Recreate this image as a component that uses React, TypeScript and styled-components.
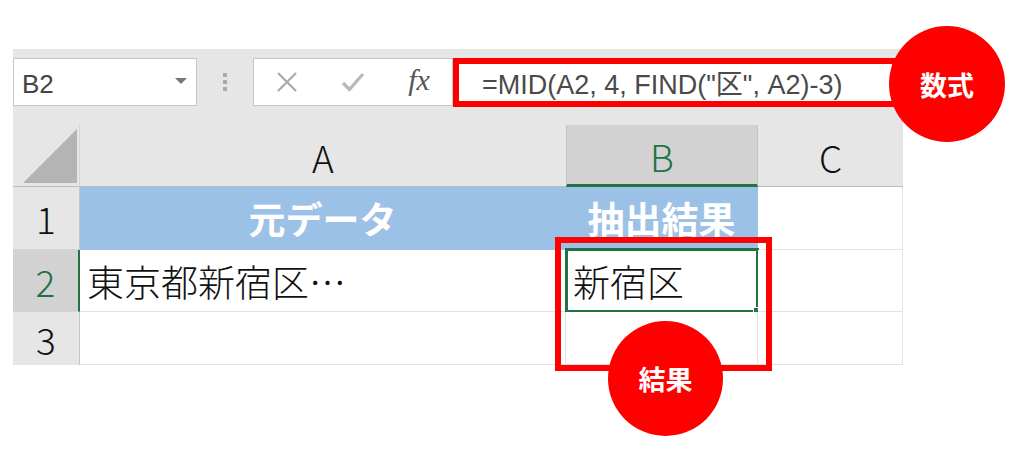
import React from "react";
import styled, { createGlobalStyle } from "styled-components";

const GlobalStyle = createGlobalStyle`
  body {
    margin: 0;
    background: #fff;
    font-family: "Noto Sans CJK JP", "Liberation Sans", sans-serif;
  }
  * {
    box-sizing: border-box;
  }
`;

const Page = styled.div`
  position: relative;
  width: 1024px;
  height: 450px;
  padding: 49px 0 0 13px;
  overflow: hidden;
`;

const Sheet = styled.div`
  width: 890px;
`;

const Toolbar = styled.div`
  display: flex;
  align-items: flex-start;
  height: 76px;
  padding-top: 9px;
  background: #e6e6e6;
`;

const NameBox = styled.div`
  width: 184px;
  height: 48px;
  border: 1px solid #c6c6c6;
  background: #fff;
  display: flex;
  align-items: center;
  justify-content: space-between;
  padding: 4px 9px 0 8px;
  font-family: "Liberation Sans", sans-serif;
  font-size: 26px;
  color: #444;
`;

const DropArrow = styled.span`
  width: 0;
  height: 0;
  margin-top: -6px;
  border-left: 6px solid transparent;
  border-right: 6px solid transparent;
  border-top: 6px solid #777;
`;

const Splitter = styled.div`
  width: 56px;
  height: 48px;
  display: flex;
  flex-direction: column;
  align-items: center;
  justify-content: center;
  gap: 3px;

  span {
    width: 4px;
    height: 4px;
    background: #aaa;
  }
`;

const FormulaButtons = styled.div`
  width: 200px;
  height: 48px;
  border: 1px solid #c6c6c6;
  background: #fff;
  display: grid;
  grid-template-columns: repeat(3, 1fr);
  align-items: center;
  justify-items: center;
`;

const Fx = styled.span`
  font-family: "Liberation Serif", serif;
  font-style: italic;
  font-size: 30px;
  color: #555;
  margin-top: -4px;
`;

const FormulaInput = styled.div`
  flex: 1;
  height: 48px;
  background: #fff;
  display: flex;
  align-items: center;
  padding-left: 29px;
  font-family: "Liberation Sans", "Noto Sans CJK JP", sans-serif;
  font-size: 27px;
  color: #4a4a4a;
  white-space: nowrap;
`;

const Grid = styled.div`
  display: grid;
  grid-template-columns: 67px 486px 192px 145px;
  grid-template-rows: 62px 63px 62px 53px;
`;

const Corner = styled.div`
  background: #e6e6e6;
  border-right: 1px solid #d6d6d6;
  border-bottom: 1px solid #bdbdbd;
  display: flex;
  align-items: flex-end;
`;

const ColHeader = styled.div<{ $selected?: boolean }>`
  display: flex;
  align-items: center;
  justify-content: center;
  font-size: 37px;
  font-weight: 300;
  padding-top: 2px;
  background: ${(p) => (p.$selected ? "#d2d2d2" : "#e6e6e6")};
  color: ${(p) => (p.$selected ? "#217346" : "#111")};
  border-bottom: ${(p) => (p.$selected ? "3px solid #217346" : "1px solid #bdbdbd")};
  border-left: ${(p) => (p.$selected ? "1px solid #c4c4c4" : "none")};
  border-right: ${(p) => (p.$selected ? "1px solid #c4c4c4" : "none")};
`;

const RowHeader = styled.div<{ $selected?: boolean; $last?: boolean }>`
  display: flex;
  align-items: center;
  justify-content: center;
  font-size: 37px;
  font-weight: 300;
  background: ${(p) => (p.$selected ? "#d2d2d2" : "#e6e6e6")};
  color: ${(p) => (p.$selected ? "#217346" : "#111")};
  border-right: ${(p) => (p.$selected ? "2px solid #217346" : "1px solid #c6c6c6")};
  border-bottom: ${(p) => (p.$last ? "none" : "1px solid #d4d4d4")};
`;

const Cell = styled.div<{ $fill?: boolean; $center?: boolean }>`
  position: relative;
  display: flex;
  align-items: center;
  justify-content: ${(p) => (p.$center ? "center" : "flex-start")};
  padding-left: ${(p) => (p.$center ? "0" : "7px")};
  font-size: 37px;
  font-weight: ${(p) => (p.$fill ? 700 : 300)};
  color: ${(p) => (p.$fill ? "#fff" : "#111")};
  background: ${(p) => (p.$fill ? "#9bc2e6" : "#fff")};
  border-right: 1px solid ${(p) => (p.$fill ? "#9bc2e6" : "#e3e3e3")};
  border-bottom: 1px solid ${(p) => (p.$fill ? "#9bc2e6" : "#e3e3e3")};
  white-space: nowrap;
`;

const ActiveFrame = styled.div`
  position: absolute;
  top: -2px;
  left: -1px;
  right: -2px;
  bottom: -2px;
  border: 3px solid #217346;
  pointer-events: none;
`;

const FillHandle = styled.span`
  position: absolute;
  right: -7px;
  bottom: -7px;
  width: 10px;
  height: 10px;
  background: #217346;
  border: 1px solid #fff;
`;

const Highlight = styled.div<{ $x: number; $y: number; $w: number; $h: number }>`
  position: absolute;
  left: ${(p) => p.$x}px;
  top: ${(p) => p.$y}px;
  width: ${(p) => p.$w}px;
  height: ${(p) => p.$h}px;
  border: 6px solid #ff0000;
`;

const Badge = styled.div<{ $x: number; $y: number; $size: number }>`
  position: absolute;
  left: ${(p) => p.$x}px;
  top: ${(p) => p.$y}px;
  width: ${(p) => p.$size}px;
  height: ${(p) => p.$size}px;
  border-radius: 50%;
  background: #ff0000;
  color: #fff;
  display: flex;
  align-items: center;
  justify-content: center;
  font-size: 27px;
  font-weight: 700;
`;

const App = () => {
  return (
    <>
      <GlobalStyle />
      <Page>
        <Sheet>
          <Toolbar>
            <NameBox>
              B2
              <DropArrow />
            </NameBox>
            <Splitter>
              <span />
              <span />
              <span />
            </Splitter>
            <FormulaButtons>
              <svg width="22" height="20" viewBox="0 0 22 20">
                <path d="M2 1 L20 19 M20 1 L2 19" stroke="#aaa" strokeWidth="2.2" fill="none" />
              </svg>
              <svg width="24" height="20" viewBox="0 0 24 20">
                <path d="M2 11 L8.5 17.5 L22 2" stroke="#b8b8b8" strokeWidth="3.2" fill="none" />
              </svg>
              <Fx>fx</Fx>
            </FormulaButtons>
            <FormulaInput>=MID(A2, 4, FIND("区", A2)-3)</FormulaInput>
          </Toolbar>
          <Grid>
            <Corner>
              <svg width="66" height="61" viewBox="0 0 66 61">
                <polygon points="10,58 64,4 64,58" fill="#b4b4b4" />
              </svg>
            </Corner>
            <ColHeader>A</ColHeader>
            <ColHeader $selected>B</ColHeader>
            <ColHeader>C</ColHeader>

            <RowHeader>1</RowHeader>
            <Cell $fill $center>元データ</Cell>
            <Cell $fill $center>抽出結果</Cell>
            <Cell />

            <RowHeader $selected>2</RowHeader>
            <Cell>東京都新宿区…</Cell>
            <Cell>
              新宿区
              <ActiveFrame>
                <FillHandle />
              </ActiveFrame>
            </Cell>
            <Cell />

            <RowHeader $last>3</RowHeader>
            <Cell />
            <Cell />
            <Cell />
          </Grid>
        </Sheet>

        <Highlight $x={453} $y={58} $w={445} $h={49} />
        <Highlight $x={555} $y={237} $w={217} $h={134} />
        <Badge $x={889} $y={26} $size={116}>数式</Badge>
        <Badge $x={608} $y={321} $size={115}>結果</Badge>
      </Page>
    </>
  );
};

export default App;
